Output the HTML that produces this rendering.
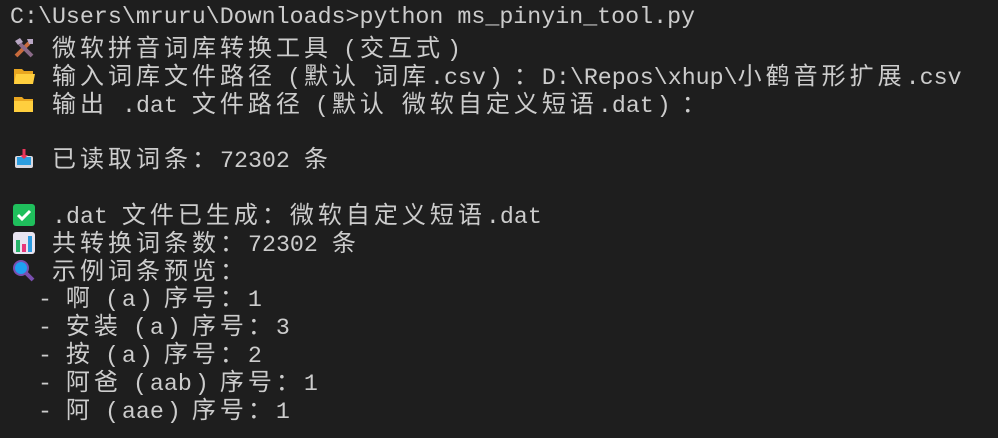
<!DOCTYPE html>
<html><head><meta charset="utf-8"><style>
html,body{margin:0;padding:0;background:#1e1e1e;width:998px;height:438px;overflow:hidden}
.t{position:absolute;left:10px;top:4px;font-family:"Liberation Mono","Noto Sans CJK SC",monospace;font-size:23.3px;color:#cccccc}
.l{height:27.85px;line-height:27.85px;white-space:pre}
.c{font-family:"Noto Sans CJK SC",sans-serif;font-size:24px;letter-spacing:4px}
.p,.q{display:inline-block;width:28px;font-family:"Liberation Mono",monospace;box-sizing:border-box}
.p{text-align:right;padding-right:3px}
.q{text-align:left;padding-left:3px}
.e{display:inline-block;width:28px;height:24px;vertical-align:-4px}
.e svg{width:24px;height:24px;margin-left:2px}
</style></head><body><div class="t">
<div class="l">C:\Users\mruru\Downloads&gt;python ms_pinyin_tool.py</div>
<div class="l"><span class="e"><svg viewBox="0 0 24 24"><path d="M4 20 L17 7" stroke="#c86b3c" stroke-width="4"/><path d="M20 20 L8 8" stroke="#8a6a88" stroke-width="4"/><path d="M3 5 L8 2 L11 6 L6 9Z" fill="#b9a7c4"/><path d="M15 3 L21 3 L21 8 L17 8Z" fill="#b9a7c4"/></svg></span> <span class="c">微软拼音词库转换工具</span><span class="p">(</span><span class="c">交互式</span><span class="q">)</span></div>
<div class="l"><span class="e"><svg viewBox="0 0 24 24"><path d="M2 5h8l2 2h9v13H2z" fill="#e9a620"/><path d="M4 10h19l-2 10H2z" fill="#ffcf3e"/></svg></span> <span class="c">输入词库文件路径</span><span class="p">(</span><span class="c">默认</span> <span class="c">词库</span>.csv<span class="q">)</span><span class="c">：</span>D:\Repos\xhup\<span class="c">小鹤音形扩展</span>.csv</div>
<div class="l"><span class="e"><svg viewBox="0 0 24 24"><path d="M2 5h8l2 2h9v13H2z" fill="#e9a620"/><path d="M2 9h19v11H2z" fill="#ffcf3e"/></svg></span> <span class="c">输出</span> .dat <span class="c">文件路径</span><span class="p">(</span><span class="c">默认</span> <span class="c">微软自定义短语</span>.dat<span class="q">)</span><span class="c">：</span></div>
<div class="l"> </div>
<div class="l"><span class="e"><svg viewBox="0 0 24 24"><rect x="3" y="9" width="18" height="12" rx="2" fill="#d8d8e0"/><rect x="5" y="10" width="14" height="8" fill="#2d9ee0"/><path d="M12 2v9" stroke="#e8365b" stroke-width="3"/><path d="M8 8l4 4 4-4z" fill="#e8365b"/></svg></span> <span class="c">已读取词条：</span>72302 <span class="c">条</span></div>
<div class="l"> </div>
<div class="l"><span class="e"><svg viewBox="0 0 24 24"><rect x="1" y="1" width="22" height="22" rx="3" fill="#1fbf5c"/><path d="M6 12l4 4 8-8" stroke="#fff" stroke-width="3" fill="none"/></svg></span> .dat <span class="c">文件已生成：微软自定义短语</span>.dat</div>
<div class="l"><span class="e"><svg viewBox="0 0 24 24"><rect x="1" y="1" width="22" height="22" rx="3" fill="#e8e4f0"/><rect x="4" y="9" width="4" height="12" fill="#27b36a"/><rect x="10" y="13" width="4" height="8" fill="#e8367a"/><rect x="16" y="5" width="4" height="16" fill="#2b9be0"/></svg></span> <span class="c">共转换词条数：</span>72302 <span class="c">条</span></div>
<div class="l"><span class="e"><svg viewBox="0 0 24 24"><path d="M14 14l7 7" stroke="#7a4fb0" stroke-width="4"/><circle cx="9" cy="9" r="8" fill="#7a4fb0"/><circle cx="9" cy="9" r="6" fill="#1ea0f0"/></svg></span> <span class="c">示例词条预览：</span></div>
<div class="l">  - <span class="c">啊</span><span class="p">(</span>a<span class="q">)</span><span class="c">序号：</span>1</div>
<div class="l">  - <span class="c">安装</span><span class="p">(</span>a<span class="q">)</span><span class="c">序号：</span>3</div>
<div class="l">  - <span class="c">按</span><span class="p">(</span>a<span class="q">)</span><span class="c">序号：</span>2</div>
<div class="l">  - <span class="c">阿爸</span><span class="p">(</span>aab<span class="q">)</span><span class="c">序号：</span>1</div>
<div class="l">  - <span class="c">阿</span><span class="p">(</span>aae<span class="q">)</span><span class="c">序号：</span>1</div>
</div></body></html>
